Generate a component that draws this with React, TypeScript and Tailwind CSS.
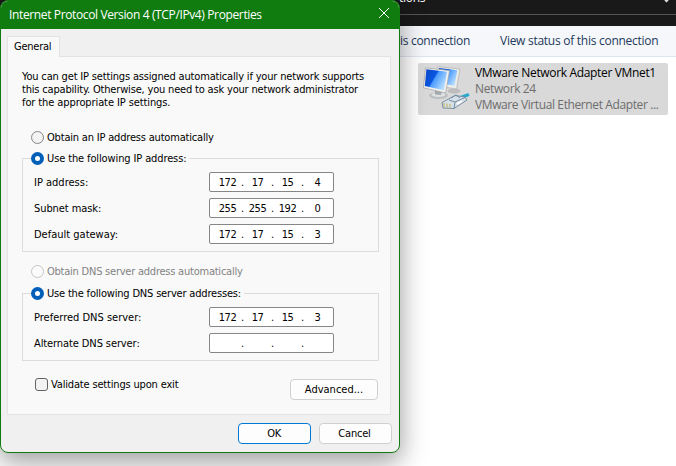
import type { ReactNode } from "react";

const TAHOMA = "font-['DejaVu_Sans_Condensed','DejaVu_Sans',sans-serif] [font-stretch:condensed] text-[11px] leading-[13px] whitespace-nowrap";
const SEGOE = "font-['Open_Sans','Noto_Sans',sans-serif] whitespace-nowrap";

function Radio({ checked = false, disabled = false }: { checked?: boolean; disabled?: boolean }) {
  if (checked) {
    return (
      <span className="flex size-[13px] shrink-0 items-center justify-center rounded-full bg-[#005fb8]">
        <span className="size-[5px] rounded-full bg-white" />
      </span>
    );
  }
  return (
    <span
      className={
        disabled
          ? "size-[13px] shrink-0 rounded-full border border-[#c5c5c5] bg-[#fbfbfb]"
          : "size-[13px] shrink-0 rounded-full border border-[#858585] bg-[#f3f3f3]"
      }
    />
  );
}

function IpField({ octets }: { octets: string[] }) {
  return (
    <div className="flex h-5 w-[125px] items-center rounded-[2px] border border-[#868686] bg-white pl-1 text-black">
      {octets.map((octet, i) => (
        <span key={i} className="flex">
          <span className="w-[27px] text-center tracking-[-0.5px]">{octet}</span>
          {i < 3 && <span className="w-[3px]">.</span>}
        </span>
      ))}
    </div>
  );
}

function FieldRow({ label, octets }: { label: ReactNode; octets: string[] }) {
  return (
    <div className="flex h-5 items-center">
      <div className="w-[175px]">{label}</div>
      <IpField octets={octets} />
    </div>
  );
}

function AdapterIcon() {
  return (
    <svg width="48" height="46" viewBox="0 0 48 46" className="shrink-0">
      <defs>
        <linearGradient id="screen" x1="0" y1="0" x2="1" y2="0.55">
          <stop offset="0" stopColor="#0a48c8" />
          <stop offset="0.48" stopColor="#0a55e0" />
          <stop offset="0.54" stopColor="#4c9cff" />
          <stop offset="1" stopColor="#b4dcff" />
        </linearGradient>
      </defs>
      <ellipse cx="31" cy="25" rx="6.5" ry="2.5" fill="#bdbdbd" />
      <path d="M15 0.6 L37 3 L33.5 23 L15 20Z" fill="#ecece8" stroke="#a8a8a8" strokeWidth="0.6" />
      <path d="M16 2 L34.3 4.3 L31.5 19.8 L16 17Z" fill="url(#screen)" />
      <ellipse cx="15.5" cy="29.5" rx="9.5" ry="3.4" fill="#bcbfc1" />
      <ellipse cx="15.5" cy="28.6" rx="7" ry="2.3" fill="#dfe1e2" />
      <path d="M12 24 L19 25 L18 29 L12 28.5Z" fill="#a5aaae" />
      <path d="M2.5 1.8 L26.5 4.6 L22.6 27 L0.4 21.8Z" fill="#f0f0ee" stroke="#a3a3a3" strokeWidth="0.7" />
      <path d="M3.4 3.3 L24 5.8 L20.8 24.2 L1.8 20Z" fill="url(#screen)" />
      <path d="M37.5 31.5 L46 28.5" stroke="#28a8ce" strokeWidth="3.2" />
      <path d="M19 36.5 L32 29.5 L42 31 L44 34 L31 42.5 L20 42Z" fill="#d7e0e7" stroke="#6f879f" strokeWidth="0.9" />
      <path d="M26 34 L32 36 L42 31.5 M32 36 L31 42.5 M28 32 L33 29 L37 32" fill="none" stroke="#718ba4" strokeWidth="1" />
      <path d="M21 37 L21 41 M24 37.5 L24 41.5 M27 38 L27 41.5" stroke="#c3bb76" strokeWidth="1.3" />
      <path d="M34 38 L39 35" stroke="#fff" strokeWidth="2" />
    </svg>
  );
}

function ConnectionsWindow() {
  return (
    <div className="flex h-full w-full flex-col bg-white pl-[398px]">
      <div className="-ml-[398px] h-[26px] overflow-hidden bg-[#191919] pl-[398px]">
        <div className="relative h-[15px] border-b border-[#555] text-white">
          <span className={`${SEGOE} absolute top-[-10px] left-px text-[12px] leading-4 tracking-[-0.3px]`}>tions</span>
          <span className="absolute top-[-1px] left-[267px] size-[3px] rotate-45 bg-[#ddd]" />
        </div>
      </div>
      <div className="-ml-[398px] flex h-[31px] items-center border-b border-[#dfe5ec] bg-[#f5f7fa] pl-[400px]">
        <span className={`${SEGOE} w-[100px] text-[12px] leading-4 tracking-[-0.3px] text-[#1e395b]`}>is connection</span>
        <span className={`${SEGOE} text-[12px] leading-4 tracking-[-0.27px] text-[#1e395b]`}>View status of this connection</span>
      </div>
      <div className="pt-[6px] pl-5">
        <div className="flex h-[52px] w-[250px] rounded-[2px] bg-[#d9d9d9] pt-[3px] pl-[5px]">
          <AdapterIcon />
          <div className={`${SEGOE} -mt-[1px] flex flex-col pl-1 text-[12px] leading-4 text-[#6d6d6d]`}>
            <span className="tracking-[-0.34px] text-black">VMware Network Adapter VMnet1</span>
            <span className="tracking-[-0.38px]">Network 24</span>
            <span className="tracking-[-0.39px]">VMware Virtual Ethernet Adapter ...</span>
          </div>
        </div>
      </div>
    </div>
  );
}

function PropertiesDialog() {
  return (
    <div className="absolute top-0 left-0 flex h-[453px] w-[400px] flex-col overflow-hidden rounded-lg border border-[#107c10] bg-[#f0f0f0] shadow-[0_8px_26px_1px_rgba(0,0,0,0.38)]">
      <div className="flex h-7 shrink-0 items-center justify-between bg-[#107c10] pr-[10px] pl-2 text-white">
        <span className={`${SEGOE} -mt-px text-[12px] leading-4 tracking-[-0.37px]`}>Internet Protocol Version 4 (TCP/IPv4) Properties</span>
        <svg width="10" height="10" viewBox="0 0 10 10" className="-mt-[4px]" stroke="white" strokeWidth="1">
          <path d="M0 0 L10 10 M10 0 L0 10" />
        </svg>
      </div>

      <div className={`${TAHOMA} flex flex-1 flex-col px-[6px] pt-[7px] text-black`}>
        <div className="z-10 -mb-px flex h-[21px] w-[53px] items-center border border-b-0 border-[#e3e3e3] bg-[#f9f9f9] pb-[2px] pl-[6px]">
          <span className="tracking-[-0.25px]">General</span>
        </div>
        <div className="h-[359px] w-[384px] border border-[#e3e3e3] bg-[#f9f9f9] pt-[13px] pl-[14px]">
          <div className="flex flex-col">
            <span className="tracking-[-0.17px]">You can get IP settings assigned automatically if your network supports</span>
            <span className="tracking-[-0.18px]">this capability. Otherwise, you need to ask your network administrator</span>
            <span className="tracking-[-0.1px]">for the appropriate IP settings.</span>
          </div>

          <div className="mt-[22px] flex h-[13px] items-center gap-[3px] pl-[9px]">
            <Radio />
            <span className="tracking-[-0.19px]">Obtain an IP address automatically</span>
          </div>

          <div className="mt-[14px] h-[94px] w-[357px] border border-[#dcdcdc] pl-[11px]">
            <div className="-mt-[7px] -ml-[3px] flex h-[13px] w-fit items-center gap-[3px] bg-[#f9f9f9] pr-[3px]">
              <Radio checked />
              <span className="tracking-[-0.12px]">Use the following IP address:</span>
            </div>
            <div className="mt-[7px] flex flex-col gap-[6px]">
              <FieldRow label={<span>IP address:</span>} octets={["172", "17", "15", "4"]} />
              <FieldRow label={<span className="tracking-[-0.08px]">Subnet mask:</span>} octets={["255", "255", "192", "0"]} />
              <FieldRow label={<span>Default gateway:</span>} octets={["172", "17", "15", "3"]} />
            </div>
          </div>

          <div className="mt-[13px] flex h-[13px] items-center gap-[3px] pl-[9px] text-[#838383]">
            <Radio disabled />
            <span className="tracking-[-0.23px]">Obtain DNS server address automatically</span>
          </div>

          <div className="mt-[15px] h-[68px] w-[357px] border border-[#dcdcdc] pl-[11px]">
            <div className="-mt-[7px] -ml-[3px] flex h-[13px] w-fit items-center gap-[3px] bg-[#f9f9f9] pr-[3px]">
              <Radio checked />
              <span className="tracking-[-0.18px]">Use the following DNS server addresses:</span>
            </div>
            <div className="mt-[7px] flex flex-col gap-[6px]">
              <FieldRow label={<span>Preferred DNS server:</span>} octets={["172", "17", "15", "3"]} />
              <FieldRow label={<span className="tracking-[-0.1px]">Alternate DNS server:</span>} octets={["", "", "", ""]} />
            </div>
          </div>

          <div className="mt-[17px] flex w-[356px] justify-between pl-[13px]">
            <div className="flex h-[13px] items-center gap-[3px]">
              <span className="size-[13px] rounded-[3px] border border-[#626262] bg-[#f3f3f3]" />
              <span className="tracking-[-0.17px]">Validate settings upon exit</span>
            </div>
            <div className="mt-px flex h-[21px] w-[88px] items-center justify-center rounded-[4px] border border-[#d0d0d0] bg-[#fdfdfd]">
              <span>Advanced...</span>
            </div>
          </div>
        </div>

        <div className="mt-2 flex justify-end gap-2 pr-px">
          <div className="flex h-[21px] w-[73px] items-center justify-center rounded-[4px] border border-[#0078d4] bg-[#fdfdfd]">
            <span className="pr-px tracking-[-0.3px]">OK</span>
          </div>
          <div className="flex h-[21px] w-[73px] items-center justify-center rounded-[4px] border border-[#d0d0d0] bg-[#fdfdfd]">
            <span className="pr-[2px] tracking-[-0.2px]">Cancel</span>
          </div>
        </div>
      </div>
    </div>
  );
}

export default function App() {
  return (
    <div className="relative h-[466px] w-[676px] overflow-hidden bg-white">
      <ConnectionsWindow />
      <PropertiesDialog />
    </div>
  );
}
